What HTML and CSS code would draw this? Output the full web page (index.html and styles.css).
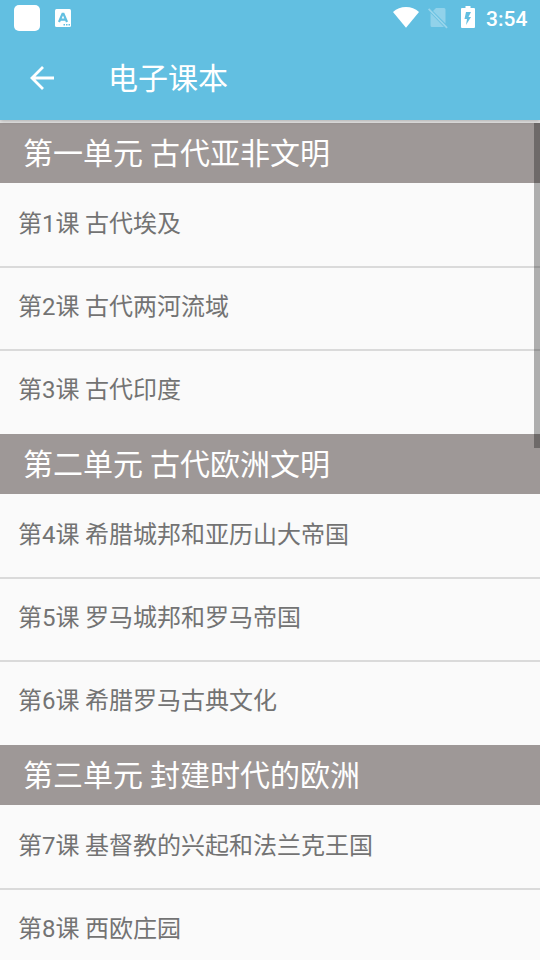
FILE: index.html
```html
<!DOCTYPE html>
<html lang="zh-CN">
<head>
<meta charset="utf-8">
<title>电子课本</title>
<link rel="stylesheet" href="styles.css">
</head>
<body>
<header class="header">
  <div class="status">
    <span class="app-square"></span>
    <svg class="lang-icon" width="16" height="18" viewBox="0 0 16 18"><rect width="16" height="18" rx="1.500" fill="#fff"/><path fill="none" stroke="#62bfe1" stroke-width="2.200" d="M4 13 7.500 4.800h1L12 13M5.500 10.600h5"/><path fill="#62bfe1" d="M8.500 15h1.500v1.500H8.500ZM11 15h1.500v1.500H11ZM13.500 15H15v1.500h-1.500Z"/></svg>
    <span class="spacer"></span>
    <svg class="wifi" width="26" height="22" viewBox="0 0 26 22"><path fill="#fff" d="M0 6Q5.500 1 13 1T26 6L13 21.700Z"/></svg>
    <svg class="sim" width="20" height="22" viewBox="0 0 20 22"><path fill="#fff" opacity=".3" d="M8 1H16q1.500 0 1.500 1.500V16.500L5 4ZM2.500 6 16 20H4q-1.500 0-1.500-1.500Z"/><path stroke="#fff" stroke-width="1.700" opacity=".35" d="m.6 1.800 18.500 19"/></svg>
    <svg class="battery" width="14" height="22" viewBox="0 0 14 22"><path fill="#fff" fill-rule="evenodd" d="M4.500 0h5v2H13q1 0 1 1v18q0 1-1 1H1q-1 0-1-1V3q0-1 1-1h3.500ZM5 6 3.500 13H6L5 19l5-8H7.500L10 6Z"/></svg>
    <span class="time">3:54</span>
  </div>
  <div class="toolbar">
    <svg class="back" width="24" height="24" viewBox="0 0 24 24"><path fill="none" stroke="#fff" stroke-width="2.800" d="M24 12H2M13 1 2 12l11 11"/></svg>
    <h1 class="title">电子课本</h1>
  </div>
</header>
<main class="list">
  <h2 class="unit">第一单元 古代亚非文明</h2>
  <ul class="lessons"><li>第1课 古代埃及</li><li>第2课 古代两河流域</li><li>第3课 古代印度</li></ul>
  <h2 class="unit">第二单元 古代欧洲文明</h2>
  <ul class="lessons"><li>第4课 希腊城邦和亚历山大帝国</li><li>第5课 罗马城邦和罗马帝国</li><li>第6课 希腊罗马古典文化</li></ul>
  <h2 class="unit">第三单元 封建时代的欧洲</h2>
  <ul class="lessons"><li>第7课 基督教的兴起和法兰克王国</li><li>第8课 西欧庄园</li></ul>
  <div class="scrollbar"></div>
</main>
</body>
</html>
```
FILE: styles.css
```css
* { box-sizing: border-box; margin: 0; padding: 0; }
body { width: 540px; height: 960px; overflow: hidden; background: #fafafa; font-family: Roboto, "Noto Sans CJK SC", sans-serif; }
.header { position: relative; z-index: 1; height: 120px; background: #62bfe1; color: #fff; box-shadow: 0 1px 4px rgba(0, 0, 0, .25); }
.status { height: 36px; display: flex; align-items: center; padding: 0 12px 0 14px; }
.app-square { width: 26px; height: 26px; border-radius: 5px; background: #fff; }
.lang-icon { margin-left: 15px; }
.spacer { flex: 1; }
.wifi, .battery { position: relative; top: -1px; }
.sim { margin-left: 9px; }
.battery { margin-left: 13px; }
.time { margin-left: 11px; width: 42px; font-size: 21px; font-weight: 500; line-height: 36px; padding-top: 2px; }
.toolbar { height: 84px; display: flex; align-items: center; padding-left: 30px; }
.title { margin-left: 54px; padding-top: 2px; font-size: 30px; font-weight: 400; line-height: 44px; }
.list { position: relative; height: 840px; overflow: hidden; border-top: 3px solid #e4e4e4; }
.unit { height: 60px; padding-left: 23px; background: #9e9897; color: #fff; font-size: 30px; font-weight: 400; line-height: 62px; word-spacing: -.5px; }
.lessons { list-style: none; }
.lessons li { height: 83px; padding-left: 18px; color: #737373; font-size: 24px; line-height: 83px; word-spacing: -.4px; }
.lessons li + li { border-top: 2px solid #dadada; line-height: 79px; }
.lessons li:last-child { height: 85px; }
.scrollbar { position: absolute; top: 0; right: 0; width: 6px; height: 325px; background: rgba(0, 0, 0, .3); }
```
